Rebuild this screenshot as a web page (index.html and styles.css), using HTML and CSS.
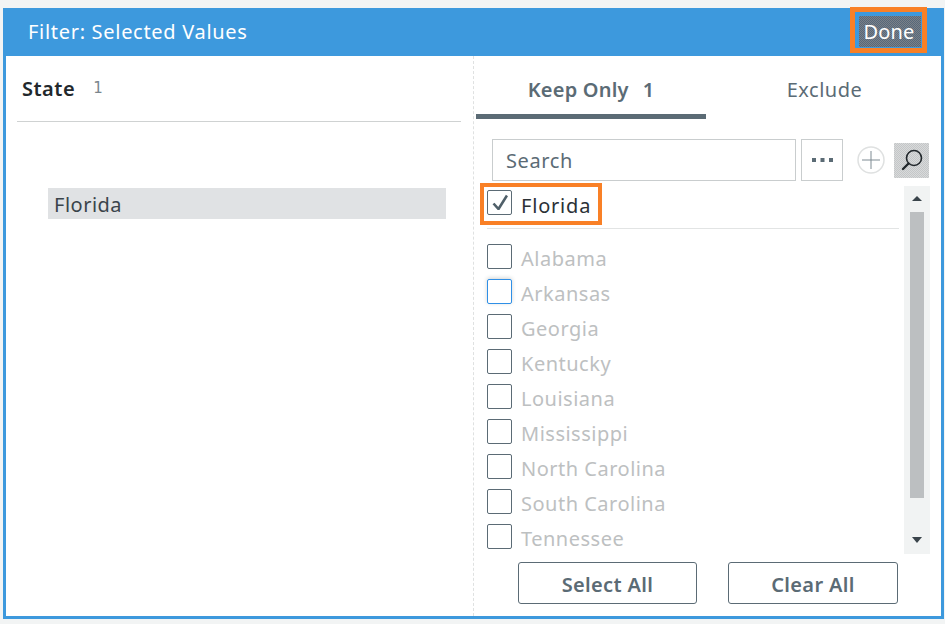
FILE: index.html
```html
<!DOCTYPE html>
<html lang="en">
<head>
  <meta charset="UTF-8" />
  <title>Filter: Selected Values</title>
  <link rel="stylesheet" href="styles.css">
</head>
<body>
  <div class="dialog">
    <div class="header">
      <span class="title">Filter: Selected Values</span>
      <div class="done-mark"><button class="done">Done</button></div>
    </div>
    <div class="main">
      <div class="left">
        <div class="field"><b>State</b><span class="count">1</span></div>
        <div class="picked">Florida</div>
      </div>
      <div class="right">
        <div class="tabs">
          <div class="tab active">Keep Only<span class="num">1</span></div>
          <div class="tab">Exclude</div>
        </div>
        <div class="tools">
          <div class="search">Search</div>
          <div class="more">
            <svg width="21" height="4" viewBox="0 0 21 4"><path fill="#5b6b75" d="M0 0h4v4H0zM8.500 0h4v4h-4zM17 0h4v4h-4z"/></svg>
          </div>
          <svg class="plus" width="28" height="28" viewBox="0 0 28 28"><circle cx="14" cy="14" r="13" fill="none" stroke="#dfe1e1" stroke-width="1.500"/><path d="M14 5v18M5 14h18" stroke="#7f8b93" stroke-width="1"/></svg>
          <div class="find">
            <svg width="35" height="35" viewBox="0 0 35 35"><circle cx="20" cy="15" r="7.500" fill="none" stroke="#22282c" stroke-width="1.600"/><path d="M14.500 20.500L9 26" stroke="#22282c" stroke-width="2.400" stroke-linecap="round"/></svg>
          </div>
        </div>
        <div class="values">
          <div class="list">
            <div class="mark">
              <span class="box">
                <svg width="16" height="16" viewBox="0 0 16 16"><path d="M1.500 9.500L6.500 15L15 1.500" fill="none" stroke="#4f5f69" stroke-width="2.600"/></svg>
              </span>
              <span class="on">Florida</span>
            </div>
            <div class="rule"></div>
            <div class="row"><span class="box"></span>Alabama</div>
            <div class="row"><span class="box focus"></span>Arkansas</div>
            <div class="row"><span class="box"></span>Georgia</div>
            <div class="row"><span class="box"></span>Kentucky</div>
            <div class="row"><span class="box"></span>Louisiana</div>
            <div class="row"><span class="box"></span>Mississippi</div>
            <div class="row"><span class="box"></span>North Carolina</div>
            <div class="row"><span class="box"></span>South Carolina</div>
            <div class="row"><span class="box"></span>Tennessee</div>
          </div>
          <div class="scroll">
            <div class="arrow up"></div>
            <div class="thumb"></div>
            <div class="arrow down"></div>
          </div>
        </div>
        <div class="actions">
          <button class="btn select">Select All</button>
          <button class="btn clear">Clear All</button>
        </div>
      </div>
    </div>
  </div>
</body>
</html>
```

FILE: styles.css
```css
body {
  margin: 0;
  padding-top: 8px;
  background-color: #f2f4f4;
  font-family: "Noto Sans", sans-serif;
  font-size: 20px;
  letter-spacing: 0.5px;
}
button {
  font-family: inherit;
  letter-spacing: inherit;
}
.dialog {
  box-sizing: border-box;
  width: 941px;
  height: 611px;
  margin-left: 3px;
  border: 3px solid #3d99dd;
  border-top: 0;
  background-color: #fff;
}
.header {
  display: flex;
  align-items: flex-start;
  justify-content: space-between;
  height: 48px;
  margin: 0 -3px;
  padding-left: 25px;
  padding-right: 17px;
  background-color: #3d99dd;
  color: #fff;
}
.title {
  letter-spacing: 0.7px;
  line-height: 48px;
}
.done-mark {
  box-sizing: border-box;
  width: 77px;
  height: 46px;
  margin-top: -1px;
  padding: 4px;
  border: 5px solid #f98026;
}
.done {
  display: block;
  width: 62px;
  height: 31px;
  margin-left: auto;
  padding: 0 2px 0 0;
  border: 0;
  background: repeating-conic-gradient(#56687a 0 25%, #7a8088 0 50%) 0 0 / 2px 2px;
  color: #fff;
  font-size: 20px;
  letter-spacing: 0.2px;
}
.main {
  display: grid;
  grid-template-columns: 467px 468px;
  height: 560px;
}
.field {
  display: flex;
  align-items: center;
  height: 65px;
  margin: 0 12px 0 11px;
  padding-left: 5px;
  border-bottom: 1px solid #cfd2d2;
  color: #22282c;
}
.field b {
  font-weight: 600;
}
.count {
  margin-left: 18px;
  margin-top: -2px;
  color: #7b868d;
  font-family: "DejaVu Sans", sans-serif;
  font-size: 15px;
}
.picked {
  width: 392px;
  height: 31px;
  margin: 66px 0 0 42px;
  padding-left: 6px;
  background-color: #e0e2e4;
  color: #3a444b;
  line-height: 33px;
}
.right {
  border-left: 1px dashed #dfe1e1;
}
.tabs {
  display: flex;
  margin-left: 2px;
  color: #5b6b75;
}
.tab {
  box-sizing: border-box;
  width: 235px;
  height: 63px;
  padding-top: 19px;
  padding-left: 2px;
  text-align: center;
  line-height: 30px;
}
.tab.active {
  width: 230px;
  padding-left: 0;
  border-bottom: 5px solid #5b6b75;
  font-weight: 600;
  letter-spacing: 0.2px;
}
.num {
  margin-left: 14px;
}
.tools {
  display: flex;
  align-items: center;
  height: 42px;
  margin-top: 20px;
  padding-left: 18px;
}
.search {
  box-sizing: border-box;
  width: 304px;
  height: 42px;
  padding-left: 13px;
  border: 1px solid #c9cdce;
  color: #5b6b75;
  letter-spacing: 0.6px;
  line-height: 42px;
}
.more {
  display: flex;
  align-items: center;
  justify-content: center;
  box-sizing: border-box;
  width: 42px;
  height: 42px;
  margin-left: 5px;
  border: 1px solid #c9cdce;
}
.plus {
  margin-left: 14px;
}
.find {
  width: 35px;
  height: 35px;
  margin-left: 9px;
  background: repeating-conic-gradient(#c4c6c7 0 25%, #d8dadb 0 50%) 0 0 / 2px 2px;
}
.values {
  display: flex;
  height: 373px;
}
.list {
  box-sizing: border-box;
  width: 430px;
  padding-top: 2px;
  color: #bdc0c1;
}
.mark {
  display: flex;
  align-items: center;
  box-sizing: border-box;
  width: 122px;
  height: 42px;
  margin-left: 6px;
  padding-left: 3px;
  border: 4px solid #f98026;
}
.on {
  margin-top: 2px;
  color: #2b3136;
  letter-spacing: 0.8px;
}
.box {
  display: flex;
  align-items: center;
  justify-content: center;
  flex: none;
  box-sizing: border-box;
  width: 25px;
  height: 25px;
  margin: -4px 9px 0 0;
  border: 1px solid #5b6b75;
  border-radius: 2px;
  background-color: #fff;
}
.box.focus {
  border-color: #2f8fe6;
  box-shadow: 0 -1px 4px #d0d3d3;
}
.rule {
  width: 412px;
  height: 1px;
  margin: 3px 0 12px 13px;
  background-color: #e2e4e4;
}
.row {
  display: flex;
  align-items: center;
  height: 35px;
  margin-left: 13px;
}
.scroll {
  display: flex;
  flex-direction: column;
  align-items: center;
  width: 26px;
  height: 368px;
  margin-top: 5px;
  background-color: #f1f3f3;
}
.arrow {
  flex: none;
  width: 0;
  height: 0;
  border-left: 5px solid transparent;
  border-right: 5px solid transparent;
}
.arrow.up {
  margin: 10px 0 11px;
  border-bottom: 5px solid #3a444b;
}
.arrow.down {
  margin: auto 0 11px;
  border-top: 6px solid #3a444b;
}
.thumb {
  flex: none;
  width: 14px;
  height: 286px;
  background-color: #bcbfc1;
}
.actions {
  display: flex;
  gap: 31px;
  margin: 8px 0 0 44px;
}
.btn {
  height: 42px;
  padding: 2px 0 0;
  border: 1px solid #5b6b75;
  border-radius: 3px;
  background-color: #fff;
  color: #5b6b75;
  font-size: 20px;
  font-weight: 600;
  letter-spacing: 0.35px;
}
.select {
  width: 179px;
}
.clear {
  width: 170px;
}
```
